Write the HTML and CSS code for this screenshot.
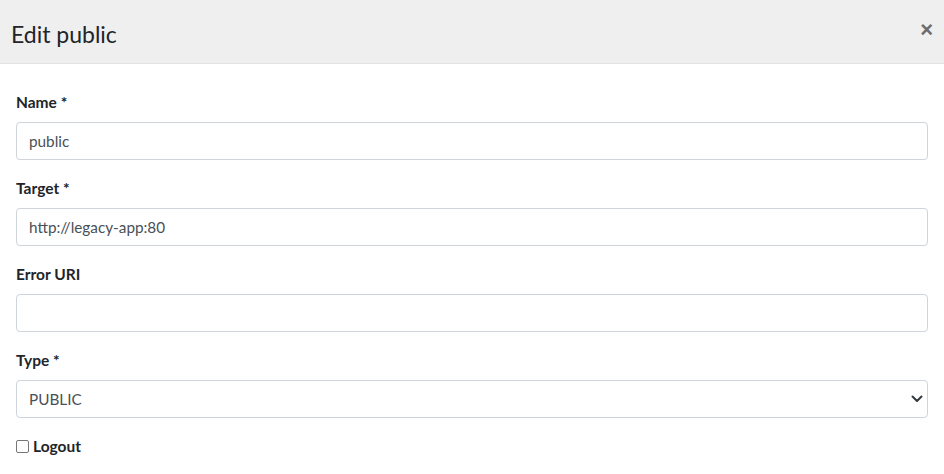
FILE: index.html
```html
<!doctype html>
<html lang="en">
  <head>
    <meta charset="UTF-8" />
    <meta name="viewport" content="width=device-width, initial-scale=1.0" />
    <title>Edit public</title>
    <link rel="stylesheet" href="styles.css">
  </head>
  <body>
    <div class="modal">
      <div class="modal-header">
        <h1 class="modal-title">Edit public</h1>
        <button class="close" aria-label="Close">&times;</button>
      </div>

      <form class="modal-body">
        <div class="form-group">
          <label class="form-label">Name *</label>
          <input class="form-control" type="text" value="public" />
        </div>

        <div class="form-group">
          <label class="form-label">Target *</label>
          <input class="form-control" type="text" value="http://legacy-app:80" />
        </div>

        <div class="form-group">
          <label class="form-label">Error URI</label>
          <input class="form-control" type="text" value="" />
        </div>

        <div class="form-group">
          <label class="form-label">Type *</label>
          <div class="select-wrap">
            <select class="form-control">
              <option selected>PUBLIC</option>
              <option>PROTECTED</option>
            </select>
            <svg class="select-arrow" width="12" height="8" viewBox="0 0 12 8">
              <path d="M1.5 1.5 L6 6 L10.5 1.5" fill="none" stroke="#343a40" stroke-width="2" stroke-linecap="round" stroke-linejoin="round" />
            </svg>
          </div>
        </div>

        <label class="check">
          <input type="checkbox" />
          <span>Logout</span>
        </label>
      </form>
    </div>
  </body>
</html>
```

FILE: styles.css
```css
body {
  margin: 0;
  font-family: 'Source Sans Pro', Lato, 'Noto Sans', sans-serif;
  font-size: 15px;
  color: #212529;
  background-color: #fff;
}
.modal {
  width: 944px;
}
.modal-header {
  display: flex;
  align-items: center;
  justify-content: space-between;
  height: 63px;
  padding: 0 11px;
  background-color: #efefef;
  border-bottom: 1px solid #e3e3e3;
  box-sizing: content-box;
  width: 922px;
}
.modal-title {
  margin: 0;
  font-size: 23px;
  font-weight: 400;
  color: #212529;
  position: relative;
  top: 2px;
}
.close {
  border: none;
  background: none;
  padding: 0;
  font-size: 22px;
  font-weight: 700;
  line-height: 1;
  color: #6c6c6c;
  cursor: pointer;
  margin-top: -3px;
}
.modal-body {
  padding: 28px 16px 0;
}
.form-group {
  margin-bottom: 18px;
}
.form-label {
  display: block;
  font-weight: 700;
  font-size: 15.5px;
  line-height: 20px;
  margin-bottom: 10px;
}
.form-control {
  display: block;
  width: 100%;
  height: 38px;
  box-sizing: border-box;
  padding: 0 12px;
  font-family: inherit;
  font-size: 15.3px;
  color: #495057;
  background-color: #fff;
  border: 1px solid #ced4da;
  border-radius: 4px;
}
.select-wrap {
  position: relative;
}
select.form-control {
  appearance: none;
  -webkit-appearance: none;
}
.select-arrow {
  position: absolute;
  right: 5px;
  top: 15px;
  pointer-events: none;
}
.check {
  display: flex;
  align-items: center;
  gap: 4px;
  font-weight: 700;
  font-size: 15.5px;
  line-height: 20px;
}
.check input {
  appearance: none;
  -webkit-appearance: none;
  width: 13px;
  height: 13px;
  margin: 0;
  border: 1.5px solid #767676;
  border-radius: 2px;
  box-sizing: border-box;
}
```
